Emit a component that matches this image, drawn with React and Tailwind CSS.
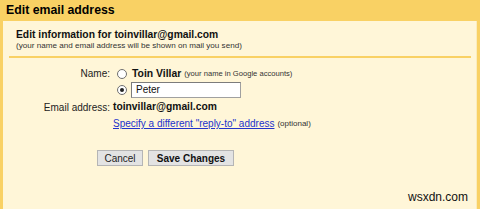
import React from 'react';

function Radio({ checked }) {
  return (
    <span className="w-[10px] h-[10px] rounded-full border border-[#6f6f6f] bg-white flex items-center justify-center shrink-0">
      {checked && <span className="w-[4px] h-[4px] rounded-full bg-[#222]" />}
    </span>
  );
}

export default function App() {
  return (
    <div className="w-[480px] h-[209px] bg-[#f9d164] flex flex-col font-['Liberation_Sans',Arial,sans-serif] text-[#111] overflow-hidden">
      <div className="h-[21px] pl-[6px] flex items-center text-[12.3px] font-bold text-black">Edit email address</div>

      <div className="flex-1 mx-[3px] bg-[#fff6d8] border-r border-[#fbecbc] flex flex-col">
        <div className="pl-[13px] pt-[8px]">
          <div className="text-[10.3px] font-bold leading-[12px]">Edit information for toinvillar@gmail.com</div>
          <div className="text-[8.1px] leading-[10px] text-[#333]">(your name and email address will be shown on mail you send)</div>
        </div>

        <div className="ml-[6px] mr-[5px] mt-[5px] h-[2px] bg-[#f9d164]" />

        <div className="mt-[8px] flex flex-col text-[10px]">
          <div className="h-[15px] flex items-center">
            <div className="w-[107px] text-right text-[#222]">Name:</div>
            <div className="ml-[7px] flex items-center">
              <Radio />
              <span className="ml-[5px] font-bold text-[10.4px]">Toin Villar</span>
              <span className="ml-[3px] text-[7.6px] text-[#333]">(your name in Google accounts)</span>
            </div>
          </div>

          <div className="h-[17px] flex items-center">
            <div className="w-[107px]" />
            <div className="ml-[7px] flex items-center">
              <Radio checked />
              <div className="ml-[4px] w-[110px] h-[16px] bg-white border border-[#a0a0a0] border-t-[#7c7c7c] border-l-[#7c7c7c] flex items-center pl-[4px] text-[10px]">Peter</div>
            </div>
          </div>

          <div className="mt-[1px] h-[16px] flex items-center">
            <div className="w-[107px] text-right text-[#222]">Email address:</div>
            <div className="ml-[3px] font-bold text-[10.3px]">toinvillar@gmail.com</div>
          </div>

          <div className="h-[17px] flex items-center">
            <div className="w-[107px]" />
            <span className="ml-[3px] text-[#2233cc] underline underline-offset-[1px]">Specify a different "reply-to" address</span>
            <span className="ml-[3px] text-[8px] text-[#333]">(optional)</span>
          </div>

          <div className="mt-[18px] ml-[94px] flex items-center gap-[5px]">
            <button className="w-[46px] h-[16px] bg-[#e3e3e3] border border-[#b5b5b5] text-[10px] text-[#222] flex items-center justify-center">Cancel</button>
            <button className="w-[86px] h-[16px] bg-[#e3e3e3] border border-[#b5b5b5] text-[10px] font-bold text-[#111] flex items-center justify-center">Save Changes</button>
          </div>
        </div>

        <div className="mt-auto mb-[5px] pr-[8px] flex justify-end text-[12px] leading-[14px] text-[#111]">wsxdn.com</div>
      </div>
    </div>
  );
}
